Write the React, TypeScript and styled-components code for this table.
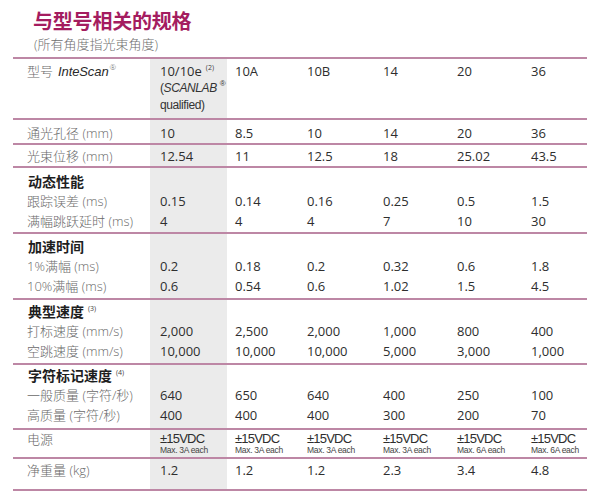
import React from "react";
import styled, { createGlobalStyle } from "styled-components";

const Global = createGlobalStyle`
  html, body { margin: 0; padding: 0; background: #fff; }
  body { font-family: "Open Sans", "Noto Sans CJK SC", sans-serif; }
`;

const LABEL_W = 137;
const SHADE_W = 77;

const Page = styled.div`
  width: 600px;
  height: 493px;
  box-sizing: border-box;
  padding: 9px 0 0 13px;
  overflow: hidden;
`;

const Title = styled.h1`
  margin: 0 0 0 20px;
  font-family: "Noto Sans CJK SC", sans-serif;
  font-weight: 700;
  font-size: 20px;
  line-height: 24px;
  color: #a41c5f;
  letter-spacing: -0.2px;
`;

const Subtitle = styled.div`
  margin: 3px 0 0 21px;
  font-family: "Open Sans", "Noto Sans CJK SC", sans-serif;
  font-weight: 300;
  font-size: 13px;
  line-height: 17px;
  color: #6f6f6f;
`;

const Table = styled.div`
  margin-top: 4px;
  width: 574px;
  border-top: 2px solid #bd87a5;
`;

const Section = styled.div<{ $pt: number; $pb: number }>`
  padding: ${(p) => p.$pt}px 0 ${(p) => p.$pb}px;
  border-bottom: 2px solid #bd87a5;
  background: linear-gradient(
    to right,
    transparent ${LABEL_W}px,
    #ebebeb ${LABEL_W}px,
    #ebebeb ${LABEL_W + SHADE_W}px,
    transparent ${LABEL_W + SHADE_W}px
  );
`;

const Row = styled.div<{ $lh?: number }>`
  display: grid;
  grid-template-columns: ${LABEL_W}px ${SHADE_W}px 72px 76px 74px 74px 64px;
  line-height: ${(p) => p.$lh ?? 20}px;
`;

const Label = styled.div`
  padding-left: 14px;
  font-family: "Open Sans", "Noto Sans CJK SC", sans-serif;
  font-weight: 300;
  font-size: 13px;
  color: #6a6a6a;
  white-space: nowrap;
`;

const GroupTitle = styled.div`
  padding-left: 15px;
  font-family: "Noto Sans CJK SC", sans-serif;
  font-weight: 700;
  font-size: 14px;
  color: #1e1e1e;
  white-space: nowrap;
`;

const Note = styled.sup`
  font-family: "Open Sans", sans-serif;
  font-weight: 400;
  font-size: 7px;
  color: #444;
  margin-left: 4px;
  vertical-align: 6px;
  line-height: 0;
`;

const Value = styled.div<{ $first?: boolean }>`
  padding-left: ${(p) => (p.$first ? 10 : 8)}px;
  font-family: "Open Sans", sans-serif;
  font-size: 13px;
  color: #2e2e2e;
  white-space: nowrap;
`;

const Brand = styled.span`
  font-family: "Liberation Sans", "Open Sans", sans-serif;
  font-style: italic;
  font-weight: 400;
  color: #2a2a2a;
  margin-left: 5px;
  letter-spacing: -0.1px;
`;

const Reg = styled.sup`
  font-size: 8px;
  vertical-align: 6px;
  line-height: 0;
  margin-left: 1px;
`;

const HeadCell = styled.div`
  padding-left: 10px;
  font-family: "Open Sans", sans-serif;
  font-size: 13px;
  color: #2e2e2e;
  line-height: 17px;
  white-space: nowrap;
`;

const HeadSub = styled.div`
  font-family: "Liberation Sans", "Roboto", sans-serif;
  font-size: 12px;
  letter-spacing: -0.4px;
  color: #333;
`;

const Italic = styled.span`
  font-style: italic;
`;

const Power = styled.div<{ $first?: boolean }>`
  padding-left: ${(p) => (p.$first ? 10 : 8)}px;
  font-family: "Liberation Sans", "Roboto", sans-serif;
  color: #2e2e2e;
  white-space: nowrap;
`;

const PowerMain = styled.div`
  font-size: 13px;
  line-height: 12px;
  letter-spacing: -0.8px;
`;

const PowerSub = styled.div`
  font-size: 8.5px;
  line-height: 11px;
  letter-spacing: -0.3px;
  color: #444;
`;

type Line = { label: string; values: string[] };

const ValueCells = ({ values }: { values: string[] }) => (
  <>
    {values.map((v, i) => (
      <Value key={i} $first={i === 0}>
        {v}
      </Value>
    ))}
  </>
);

const EmptyCells = () => (
  <>
    {Array.from({ length: 6 }).map((_, i) => (
      <div key={i} />
    ))}
  </>
);

const groups: { title: string; note?: string; lines: Line[]; pt: number; pb: number }[] = [
  {
    title: "动态性能",
    pt: 3,
    pb: 1,
    lines: [
      { label: "跟踪误差 (ms)", values: ["0.15", "0.14", "0.16", "0.25", "0.5", "1.5"] },
      { label: "满幅跳跃延时 (ms)", values: ["4", "4", "4", "7", "10", "30"] },
    ],
  },
  {
    title: "加速时间",
    pt: 2,
    pb: 2,
    lines: [
      { label: "1%满幅 (ms)", values: ["0.2", "0.18", "0.2", "0.32", "0.6", "1.8"] },
      { label: "10%满幅 (ms)", values: ["0.6", "0.54", "0.6", "1.02", "1.5", "4.5"] },
    ],
  },
  {
    title: "典型速度",
    note: "(3)",
    pt: 1,
    pb: 2,
    lines: [
      { label: "打标速度 (mm/s)", values: ["2,000", "2,500", "2,000", "1,000", "800", "400"] },
      { label: "空跳速度 (mm/s)", values: ["10,000", "10,000", "10,000", "5,000", "3,000", "1,000"] },
    ],
  },
  {
    title: "字符标记速度",
    note: "(4)",
    pt: 0,
    pb: 3,
    lines: [
      { label: "一般质量 (字符/秒)", values: ["640", "650", "640", "400", "250", "100"] },
      { label: "高质量 (字符/秒)", values: ["400", "400", "400", "300", "200", "70"] },
    ],
  },
];

const power = ["3A", "3A", "3A", "3A", "6A", "6A"];

export default function App() {
  return (
    <Page>
      <Global />
      <Title>与型号相关的规格</Title>
      <Subtitle>(所有角度指光束角度)</Subtitle>
      <Table>
        <Section $pt={4} $pb={4}>
          <Row $lh={17}>
            <Label>
              型号<Brand>InteScan</Brand>
              <Reg>®</Reg>
            </Label>
            <HeadCell>
              10/10e<Note>(2)</Note>
              <HeadSub>
                (<Italic>SCANLAB</Italic>
                <Reg> ®</Reg>
              </HeadSub>
              <HeadSub>qualified)</HeadSub>
            </HeadCell>
            {["10A", "10B", "14", "20", "36"].map((m) => (
              <Value key={m}>{m}</Value>
            ))}
          </Row>
        </Section>
        <Section $pt={3} $pb={0}>
          <Row>
            <Label>通光孔径 (mm)</Label>
            <ValueCells values={["10", "8.5", "10", "14", "20", "36"]} />
          </Row>
        </Section>
        <Section $pt={1} $pb={0}>
          <Row>
            <Label>光束位移 (mm)</Label>
            <ValueCells values={["12.54", "11", "12.5", "18", "25.02", "43.5"]} />
          </Row>
        </Section>
        {groups.map((g) => (
          <Section key={g.title} $pt={g.pt} $pb={g.pb}>
            <Row>
              <GroupTitle>
                {g.title}
                {g.note && <Note>{g.note}</Note>}
              </GroupTitle>
              <EmptyCells />
            </Row>
            {g.lines.map((l) => (
              <Row key={l.label}>
                <Label>{l.label}</Label>
                <ValueCells values={l.values} />
              </Row>
            ))}
          </Section>
        ))}
        <Section $pt={3} $pb={1}>
          <Row $lh={12}>
            <Label>电源</Label>
            {power.map((a, i) => (
              <Power key={i} $first={i === 0}>
                <PowerMain>±15VDC</PowerMain>
                <PowerSub>Max. {a} each</PowerSub>
              </Power>
            ))}
          </Row>
        </Section>
        <Section $pt={1} $pb={9}>
          <Row>
            <Label>净重量 (kg)</Label>
            <ValueCells values={["1.2", "1.2", "1.2", "2.3", "3.4", "4.8"]} />
          </Row>
        </Section>
      </Table>
    </Page>
  );
}
